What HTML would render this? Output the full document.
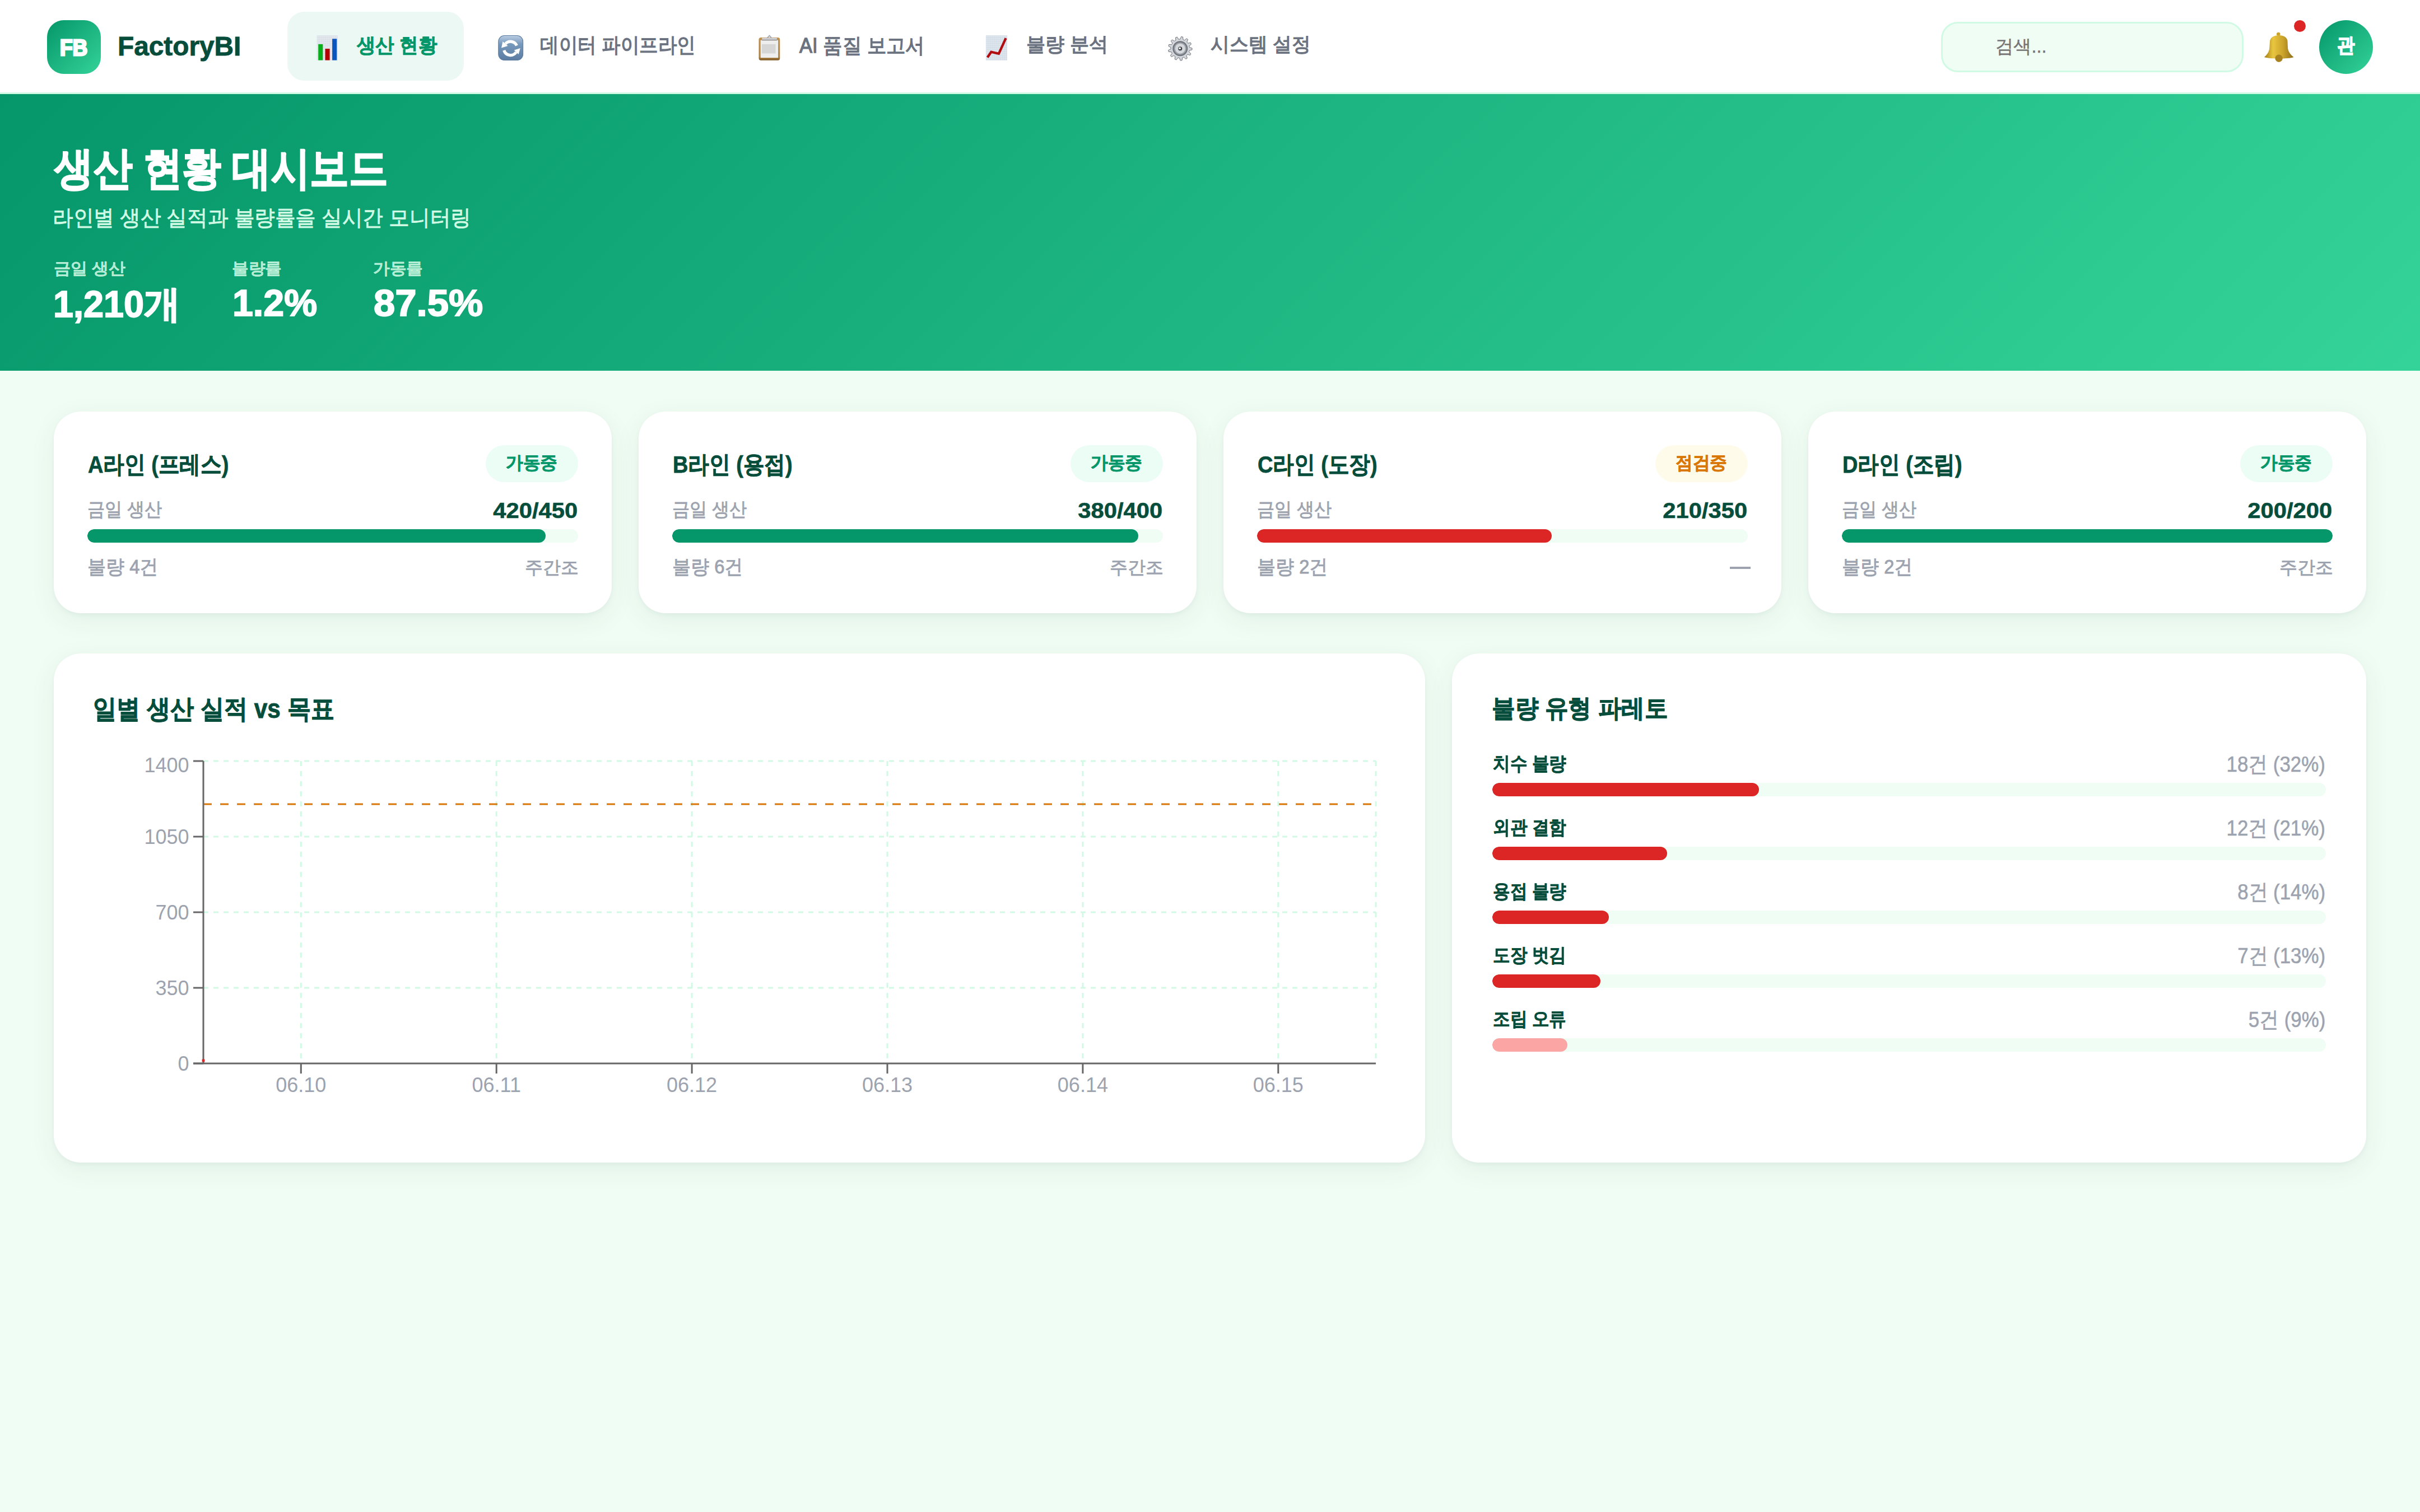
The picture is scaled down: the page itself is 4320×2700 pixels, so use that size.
<!DOCTYPE html>
<html lang="ko">
<head>
<meta charset="utf-8">
<title>FactoryBI</title>
<style>
@media (min-width: 2000px) { html { zoom: 3; } }
html { background: #f0fdf4; }
* { box-sizing: border-box; margin: 0; padding: 0; }
body { width: 1440px; height: 900px; position: relative; overflow: hidden; background: #f0fdf4; font-family: "Liberation Sans", sans-serif; }
.abs { position: absolute; }
.tx { position: absolute; display: inline-block; white-space: nowrap; line-height: 1; }
.nav { position: absolute; left: 0; top: 0; width: 1440px; height: 56px; background: #fff; border-bottom: 1px solid #d1fae5; }
.logo { position: absolute; left: 28px; top: 12px; width: 32px; height: 32px; border-radius: 10px; background: linear-gradient(135deg, #059669, #34d399); }
.navact { position: absolute; left: 171px; top: 7px; width: 105px; height: 41px; border-radius: 10px; background: #ecf8f3; }
.ic { position: absolute; top: 21px; width: 15px; height: 15px; }
.ic svg { display: block; width: 100%; height: 100%; }
.search { position: absolute; left: 1155px; top: 13px; width: 180px; height: 30px; border: 1px solid #d1fae5; background: #f0fdf4; border-radius: 10px; }
.avatar { position: absolute; left: 1380px; top: 12px; width: 32px; height: 32px; border-radius: 50%; background: linear-gradient(135deg, #059669, #34d399); }
.dot { position: absolute; left: 1364.9px; top: 12px; width: 7px; height: 7px; border-radius: 50%; background: #dc2626; }
.hero { position: absolute; left: 0; top: 56px; width: 1440px; height: 164.7px; background: linear-gradient(135deg, #059669 0%, #34d399 100%); }
.card { position: absolute; top: 245px; width: 332px; height: 120px; background: #fff; border-radius: 16px; box-shadow: 0 1px 3px rgba(0,30,15,0.035), 0 4px 16px rgba(10,60,40,0.065); }
.badge { position: absolute; top: 265px; width: 55px; height: 22px; border-radius: 11px; }
.badge.g { background: #ecfdf5; }
.badge.o { background: #fffbeb; }
.bar { position: absolute; height: 8px; border-radius: 4px; background: #f0fdf4; overflow: hidden; }
.bar i { position: absolute; left: 0; top: 0; bottom: 0; border-radius: 4px; }
.panel { position: absolute; top: 389px; height: 303px; background: #fff; border-radius: 16px; box-shadow: 0 1px 3px rgba(0,30,15,0.035), 0 4px 16px rgba(10,60,40,0.065); }
svg text { font-family: "Liberation Sans", sans-serif; }
</style>
</head>
<body>
<div class="nav"></div>
<div class="logo"></div>
<div class="navact"></div>
<div class="search"></div>
<svg class="abs" style="left:0;top:0;width:1440px;height:56px" viewBox="0 0 1440 56">
<defs>
<linearGradient id="gsync" x1="0" y1="0" x2="0" y2="1"><stop offset="0" stop-color="#b9cde2"/><stop offset="0.35" stop-color="#7698bb"/><stop offset="1" stop-color="#5b7da2"/></linearGradient>
<linearGradient id="gbell" x1="0" y1="0" x2="1" y2="0"><stop offset="0" stop-color="#a27a14"/><stop offset="0.3" stop-color="#e9c640"/><stop offset="0.65" stop-color="#c9a22a"/><stop offset="1" stop-color="#8c6c1a"/></linearGradient>
<linearGradient id="gboard" x1="0" y1="0" x2="0" y2="1"><stop offset="0" stop-color="#c2914a"/><stop offset="0.85" stop-color="#b3843f"/><stop offset="1" stop-color="#7d5726"/></linearGradient>
</defs>
<rect x="188.7" y="21.2" width="12.2" height="14.7" fill="#e4e9f0"/>
<g stroke="#d3d9e2" stroke-width="0.2"><line x1="188.7" y1="21.20" x2="200.9" y2="21.20"/><line x1="188.7" y1="22.40" x2="200.9" y2="22.40"/><line x1="188.7" y1="23.60" x2="200.9" y2="23.60"/><line x1="188.7" y1="24.80" x2="200.9" y2="24.80"/><line x1="188.7" y1="26.00" x2="200.9" y2="26.00"/><line x1="188.7" y1="27.20" x2="200.9" y2="27.20"/><line x1="188.7" y1="28.40" x2="200.9" y2="28.40"/><line x1="188.7" y1="29.60" x2="200.9" y2="29.60"/><line x1="188.7" y1="30.80" x2="200.9" y2="30.80"/><line x1="188.7" y1="32.00" x2="200.9" y2="32.00"/><line x1="188.7" y1="33.20" x2="200.9" y2="33.20"/><line x1="188.7" y1="34.40" x2="200.9" y2="34.40"/><line x1="188.7" y1="35.60" x2="200.9" y2="35.60"/><line x1="188.70" y1="21.2" x2="188.70" y2="35.9"/><line x1="189.90" y1="21.2" x2="189.90" y2="35.9"/><line x1="191.10" y1="21.2" x2="191.10" y2="35.9"/><line x1="192.30" y1="21.2" x2="192.30" y2="35.9"/><line x1="193.50" y1="21.2" x2="193.50" y2="35.9"/><line x1="194.70" y1="21.2" x2="194.70" y2="35.9"/><line x1="195.90" y1="21.2" x2="195.90" y2="35.9"/><line x1="197.10" y1="21.2" x2="197.10" y2="35.9"/><line x1="198.30" y1="21.2" x2="198.30" y2="35.9"/><line x1="199.50" y1="21.2" x2="199.50" y2="35.9"/><line x1="200.70" y1="21.2" x2="200.70" y2="35.9"/></g>
<rect x="189.4" y="26.3" width="2.7" height="9.55" fill="#07b01a"/>
<rect x="193.5" y="29" width="2.7" height="6.85" fill="#b70000"/>
<rect x="197.7" y="23.1" width="2.7" height="12.75" fill="#0b55bd"/>
<rect x="296.6" y="21.15" width="14.6" height="14.7" rx="3.6" fill="url(#gsync)" stroke="#5a7b9e" stroke-width="0.35"/>
<g fill="none" stroke="#fff" stroke-width="1.75"><path d="M307.48 27.13 A4.05 4.05 0 0 0 300.77 26.07"/><path d="M299.91 29.96 A4.05 4.05 0 0 0 307.14 31.04"/></g>
<g fill="#fff"><path d="M298.36 28.52 L299.15 24.68 L302.19 27.33 Z"/><path d="M309.6 28.65 L308.54 32.35 L305.9 29.84 Z"/></g>
<rect x="451.5" y="22.3" width="12.6" height="13.6" rx="1.3" fill="url(#gboard)"/>
<rect x="452.56" y="23.9" width="10.47" height="10.5" fill="#eeeeee"/>
<rect x="453.3" y="26.3" width="8.2" height="5.5" fill="#d6d6d6"/>
<rect x="453.43" y="22.56" width="8.86" height="1.2" fill="#cfd3d9"/>
<rect x="453.43" y="23.7" width="8.86" height="0.35" fill="#6e6e70"/>
<path d="M456.4 22.7 L457.85 21.2 L459.2 22.7" fill="none" stroke="#a3a9b1" stroke-width="0.6"/>
<rect x="586.77" y="21.17" width="12.57" height="14.73" fill="#dfe6ee"/>
<g stroke="#cdd6e0" stroke-width="0.2"><line x1="586.77" y1="21.17" x2="599.34" y2="21.17"/><line x1="586.77" y1="22.37" x2="599.34" y2="22.37"/><line x1="586.77" y1="23.57" x2="599.34" y2="23.57"/><line x1="586.77" y1="24.77" x2="599.34" y2="24.77"/><line x1="586.77" y1="25.97" x2="599.34" y2="25.97"/><line x1="586.77" y1="27.17" x2="599.34" y2="27.17"/><line x1="586.77" y1="28.37" x2="599.34" y2="28.37"/><line x1="586.77" y1="29.57" x2="599.34" y2="29.57"/><line x1="586.77" y1="30.77" x2="599.34" y2="30.77"/><line x1="586.77" y1="31.97" x2="599.34" y2="31.97"/><line x1="586.77" y1="33.17" x2="599.34" y2="33.17"/><line x1="586.77" y1="34.37" x2="599.34" y2="34.37"/><line x1="586.77" y1="35.57" x2="599.34" y2="35.57"/><line x1="586.77" y1="21.17" x2="586.77" y2="35.9"/><line x1="587.97" y1="21.17" x2="587.97" y2="35.9"/><line x1="589.17" y1="21.17" x2="589.17" y2="35.9"/><line x1="590.37" y1="21.17" x2="590.37" y2="35.9"/><line x1="591.57" y1="21.17" x2="591.57" y2="35.9"/><line x1="592.77" y1="21.17" x2="592.77" y2="35.9"/><line x1="593.97" y1="21.17" x2="593.97" y2="35.9"/><line x1="595.17" y1="21.17" x2="595.17" y2="35.9"/><line x1="596.37" y1="21.17" x2="596.37" y2="35.9"/><line x1="597.57" y1="21.17" x2="597.57" y2="35.9"/><line x1="598.77" y1="21.17" x2="598.77" y2="35.9"/></g>
<polyline points="587.56,34.2 589.81,30.9 594.31,31.95 598.53,22.7" fill="none" stroke="#b10d10" stroke-width="1.45" stroke-linejoin="miter"/>
<path d="M702.25 23.31 L702.87 21.84 L703.85 21.99 L703.98 23.58 L704.85 23.95 L706.08 22.93 L706.88 23.53 L706.26 25.00 L706.86 25.73 L708.42 25.40 L708.85 26.30 L707.62 27.31 L707.81 28.23 L709.35 28.67 L709.31 29.66 L707.75 29.99 L707.49 30.90 L708.64 31.99 L708.15 32.86 L706.62 32.42 L705.96 33.10 L706.48 34.61 L705.64 35.15 L704.49 34.04 L703.59 34.35 L703.34 35.93 L702.35 36.01 L701.84 34.50 L700.91 34.35 L699.96 35.63 L699.04 35.24 L699.30 33.67 L698.54 33.10 L697.10 33.80 L696.47 33.03 L697.42 31.75 L697.01 30.90 L695.42 30.84 L695.21 29.87 L696.66 29.18 L696.69 28.23 L695.30 27.45 L695.58 26.49 L697.17 26.55 L697.64 25.73 L696.78 24.38 L697.47 23.66 L698.85 24.46 L699.65 23.95 L699.51 22.36 L700.45 22.04 L701.31 23.39 Z" fill="#d3d6db" stroke="#62666e" stroke-width="0.3"/>
<circle cx="702.25" cy="28.91" r="4.5" fill="#70747c"/>
<circle cx="702.25" cy="28.91" r="3.7" fill="#9fa3aa"/>
<circle cx="702.25" cy="28.91" r="3.0" fill="#d5d8dd"/>
<circle cx="702.25" cy="28.91" r="1.2" fill="#3e4147"/>
<circle cx="702.05" cy="28.75" r="0.6" fill="#ffffff"/>
<circle cx="1355.73" cy="20.33" r="1.1" fill="#c9a42c"/>
<path d="M1347.30 34.03 C1348.93 32.53 1350.33 30.93 1350.43 28.13 L1350.68 24.53 C1350.93 22.23 1352.83 21.03 1355.93 21.03 C1359.03 21.03 1360.93 22.23 1361.18 24.53 L1361.33 28.13 C1361.43 30.93 1363.13 32.53 1364.83 34.03 C1361.83 35.23 1350.23 35.23 1347.30 34.03 Z" fill="url(#gbell)"/>
<circle cx="1356.03" cy="34.73" r="2.2" fill="#a8821e"/>
</svg>
<div class="dot"></div>
<div class="avatar"></div>
<div class="hero"></div>
<div class="card" style="left:32px"></div>
<div class="badge g" style="left:289px"></div>
<div class="bar" style="left:52px;top:315px;width:292px"><i style="width:93.333%;background:#059669"></i></div>
<div class="card" style="left:380px"></div>
<div class="badge g" style="left:637px"></div>
<div class="bar" style="left:400px;top:315px;width:292px"><i style="width:95%;background:#059669"></i></div>
<div class="card" style="left:728px"></div>
<div class="badge o" style="left:985px"></div>
<div class="bar" style="left:748px;top:315px;width:292px"><i style="width:60%;background:#dc2626"></i></div>
<div class="abs" style="left:1029.3px;top:337.4px;width:12.4px;height:1.3px;background:#9ca3af"></div>
<div class="card" style="left:1076px"></div>
<div class="badge g" style="left:1333px"></div>
<div class="bar" style="left:1096px;top:315px;width:292px"><i style="width:100%;background:#059669"></i></div>
<div class="panel" style="left:32px;width:816px"></div>
<div class="panel" style="left:864px;width:544px"></div>
<svg class="abs" style="left:0;top:0;width:1440px;height:900px" viewBox="0 0 1440 900">
<g stroke="#d1fae5" stroke-width="1" stroke-dasharray="3 3" fill="none">
<line x1="121" y1="588" x2="818.7" y2="588"/>
<line x1="121" y1="543" x2="818.7" y2="543"/>
<line x1="121" y1="498" x2="818.7" y2="498"/>
<line x1="121" y1="453" x2="818.7" y2="453"/>
<line x1="179.1" y1="453" x2="179.1" y2="633"/>
<line x1="295.4" y1="453" x2="295.4" y2="633"/>
<line x1="411.7" y1="453" x2="411.7" y2="633"/>
<line x1="528.0" y1="453" x2="528.0" y2="633"/>
<line x1="644.3" y1="453" x2="644.3" y2="633"/>
<line x1="760.6" y1="453" x2="760.6" y2="633"/>
<line x1="818.7" y1="453" x2="818.7" y2="633"/>
</g>
<line x1="121" y1="478.7" x2="816.7" y2="478.7" stroke="#d97706" stroke-width="1" stroke-dasharray="5 5"/>
<g stroke="#666" stroke-width="1" fill="none">
<line x1="121" y1="453" x2="121" y2="633"/>
<line x1="115" y1="633" x2="818.7" y2="633"/>
<line x1="115" y1="633" x2="121" y2="633"/>
<line x1="115" y1="588" x2="121" y2="588"/>
<line x1="115" y1="543" x2="121" y2="543"/>
<line x1="115" y1="498" x2="121" y2="498"/>
<line x1="115" y1="453" x2="121" y2="453"/>
<line x1="179.1" y1="633" x2="179.1" y2="639"/>
<line x1="295.4" y1="633" x2="295.4" y2="639"/>
<line x1="411.7" y1="633" x2="411.7" y2="639"/>
<line x1="528.0" y1="633" x2="528.0" y2="639"/>
<line x1="644.3" y1="633" x2="644.3" y2="639"/>
<line x1="760.6" y1="633" x2="760.6" y2="639"/>
</g>
<g fill="#9ca3af" font-size="12" text-anchor="end">
<text x="112.5" y="637.3">0</text>
<text x="112.5" y="592.3">350</text>
<text x="112.5" y="547.3">700</text>
<text x="112.5" y="502.3">1050</text>
<text x="112.5" y="459.6">1400</text>
</g><g fill="#9ca3af" font-size="12" text-anchor="middle">
<text x="179.1" y="650">06.10</text>
<text x="295.4" y="650">06.11</text>
<text x="411.7" y="650">06.12</text>
<text x="528.0" y="650">06.13</text>
<text x="644.3" y="650">06.14</text>
<text x="760.6" y="650">06.15</text>
</g>
<rect x="120.2" y="630.5" width="1.6" height="1.6" fill="#dc2626"/>
</svg>
<div class="bar" style="left:888px;top:466.10px;width:496px"><i style="width:32%;background:#dc2626"></i></div>
<div class="bar" style="left:888px;top:504.08px;width:496px"><i style="width:21%;background:#dc2626"></i></div>
<div class="bar" style="left:888px;top:542.06px;width:496px"><i style="width:14%;background:#dc2626"></i></div>
<div class="bar" style="left:888px;top:580.04px;width:496px"><i style="width:13%;background:#dc2626"></i></div>
<div class="bar" style="left:888px;top:618.02px;width:496px"><i style="width:9%;background:#fca5a5"></i></div>
<span class="tx" id="logoFB" style="left:35.66px;top:21.53px;font-size:13.35px;font-weight:bold;color:#fff;transform:scaleX(0.9242);transform-origin:left top;-webkit-text-stroke:1.0px #fff">FB</span>
<span class="tx" id="brand" style="left:70.16px;top:19.63px;font-size:15.96px;font-weight:bold;color:#064e3b;transform:scaleX(0.9977);transform-origin:left top;-webkit-text-stroke:0.3px #064e3b">FactoryBI</span>
<span class="tx" id="n1" style="left:212.40px;top:20.90px;font-size:12.13px;font-weight:bold;color:#059669;transform:scaleX(0.9277);transform-origin:left top;-webkit-text-stroke:0.25px #059669">생산 현황</span>
<span class="tx" id="n2" style="left:321.40px;top:21.04px;font-size:12.18px;font-weight:normal;color:#6b7280;transform:scaleX(0.9078);transform-origin:left top;-webkit-text-stroke:0.45px #6b7280">데이터 파이프라인</span>
<span class="tx" id="n3" style="left:475.54px;top:21.10px;font-size:12.37px;font-weight:normal;color:#6b7280;transform:scaleX(0.9299);transform-origin:left top;-webkit-text-stroke:0.45px #6b7280">AI 품질 보고서</span>
<span class="tx" id="n4" style="left:610.53px;top:20.70px;font-size:11.83px;font-weight:normal;color:#6b7280;transform:scaleX(0.9742);transform-origin:left top;-webkit-text-stroke:0.45px #6b7280">불량 분석</span>
<span class="tx" id="n5" style="left:720.27px;top:20.70px;font-size:11.83px;font-weight:normal;color:#6b7280;transform:scaleX(0.9651);transform-origin:left top;-webkit-text-stroke:0.45px #6b7280">시스템 설정</span>
<span class="tx" id="srch" style="left:1187.47px;top:21.86px;font-size:11.04px;font-weight:normal;color:#757575;transform:scaleX(0.9761);transform-origin:left top;-webkit-text-stroke:0.15px #757575">검색...</span>
<span class="tx" id="av" style="left:1390.67px;top:21.10px;font-size:12.04px;font-weight:bold;color:#fff;transform:scaleX(0.8755);transform-origin:left top;-webkit-text-stroke:0.5px #fff">관</span>
<span class="tx" id="h1" style="left:32.20px;top:86.57px;font-size:26.82px;font-weight:bold;color:#fff;transform:scaleX(0.8698);transform-origin:left top;-webkit-text-stroke:0.7px #fff">생산 현황 대시보드</span>
<span class="tx" id="sub" style="left:31.27px;top:123.07px;font-size:13.03px;font-weight:normal;color:#d1fae5;transform:scaleX(0.9390);transform-origin:left top;-webkit-text-stroke:0.3px #d1fae5">라인별 생산 실적과 불량률을 실시간 모니터링</span>
<span class="tx" id="sl1" style="left:31.94px;top:155.00px;font-size:9.72px;font-weight:bold;color:rgba(209,250,229,0.72);transform:scaleX(1.0332);transform-origin:left top;-webkit-text-stroke:0.1px rgba(209,250,229,0.72)">금일 생산</span>
<span class="tx" id="sl2" style="left:138.00px;top:155.00px;font-size:9.71px;font-weight:bold;color:rgba(209,250,229,0.72);transform:scaleX(1.0218);transform-origin:left top;-webkit-text-stroke:0.1px rgba(209,250,229,0.72)">불량률</span>
<span class="tx" id="sl3" style="left:222.07px;top:155.00px;font-size:9.71px;font-weight:bold;color:rgba(209,250,229,0.72);transform:scaleX(1.0227);transform-origin:left top;-webkit-text-stroke:0.1px rgba(209,250,229,0.72)">가동률</span>
<span class="tx" id="sv1" style="left:31.83px;top:170.10px;font-size:22.23px;font-weight:bold;color:#fff;transform:scaleX(0.9709);transform-origin:left top;-webkit-text-stroke:0.6px #fff">1,210개</span>
<span class="tx" id="sv2" style="left:138.17px;top:169.26px;font-size:22.14px;font-weight:bold;color:#fff;transform:scaleX(0.9980);transform-origin:left top;-webkit-text-stroke:0.6px #fff">1.2%</span>
<span class="tx" id="sv3" style="left:222.33px;top:169.26px;font-size:22.14px;font-weight:bold;color:#fff;transform:scaleX(1.0371);transform-origin:left top;-webkit-text-stroke:0.6px #fff">87.5%</span>
<span class="tx" id="ct1" style="left:52.20px;top:269.20px;font-size:14.46px;font-weight:bold;color:#064e3b;transform:scaleX(0.8749);transform-origin:left top;-webkit-text-stroke:0.25px #064e3b">A라인 (프레스)</span>
<span class="tx" id="bd1" style="left:301.14px;top:270.06px;font-size:10.68px;font-weight:bold;color:#059669;transform:scaleX(0.9608);transform-origin:left top;-webkit-text-stroke:0.25px #059669">가동중</span>
<span class="tx" id="cl1" style="left:52.00px;top:297.44px;font-size:11.36px;font-weight:normal;color:#9ca3af;transform:scaleX(0.9173);transform-origin:left top;-webkit-text-stroke:0.3px #9ca3af">금일 생산</span>
<span class="tx" id="cv1" style="right:1096.13px;top:297.33px;font-size:13.02px;font-weight:bold;color:#064e3b;transform:scaleX(1.0686);transform-origin:right top;-webkit-text-stroke:0.2px #064e3b">420/450</span>
<span class="tx" id="cb1" style="left:52.00px;top:331.57px;font-size:11.53px;font-weight:normal;color:#9ca3af;transform:scaleX(0.9450);transform-origin:left top;-webkit-text-stroke:0.3px #9ca3af">불량 4건</span>
<span class="tx" id="cs1" style="right:1095.60px;top:332.57px;font-size:10.61px;font-weight:normal;color:#9ca3af;transform:scaleX(0.9976);transform-origin:right top;-webkit-text-stroke:0.3px #9ca3af">주간조</span>
<span class="tx" id="ct1_1" style="left:400.20px;top:269.20px;font-size:14.46px;font-weight:bold;color:#064e3b;transform:scaleX(0.8749);transform-origin:left top;-webkit-text-stroke:0.25px #064e3b">B라인 (용접)</span>
<span class="tx" id="bd1_1" style="left:649.13px;top:270.06px;font-size:10.68px;font-weight:bold;color:#059669;transform:scaleX(0.9608);transform-origin:left top;-webkit-text-stroke:0.25px #059669">가동중</span>
<span class="tx" id="cl1_1" style="left:400.00px;top:297.44px;font-size:11.36px;font-weight:normal;color:#9ca3af;transform:scaleX(0.9173);transform-origin:left top;-webkit-text-stroke:0.3px #9ca3af">금일 생산</span>
<span class="tx" id="cv1_1" style="right:748.13px;top:297.33px;font-size:13.02px;font-weight:bold;color:#064e3b;transform:scaleX(1.0686);transform-origin:right top;-webkit-text-stroke:0.2px #064e3b">380/400</span>
<span class="tx" id="cb1_1" style="left:400.00px;top:331.57px;font-size:11.53px;font-weight:normal;color:#9ca3af;transform:scaleX(0.9450);transform-origin:left top;-webkit-text-stroke:0.3px #9ca3af">불량 6건</span>
<span class="tx" id="cs1_1" style="right:747.60px;top:332.57px;font-size:10.61px;font-weight:normal;color:#9ca3af;transform:scaleX(0.9976);transform-origin:right top;-webkit-text-stroke:0.3px #9ca3af">주간조</span>
<span class="tx" id="ct1_2" style="left:748.20px;top:269.20px;font-size:14.46px;font-weight:bold;color:#064e3b;transform:scaleX(0.8749);transform-origin:left top;-webkit-text-stroke:0.25px #064e3b">C라인 (도장)</span>
<span class="tx" id="bd1_2" style="left:997.13px;top:270.06px;font-size:10.68px;font-weight:bold;color:#d97706;transform:scaleX(0.9608);transform-origin:left top;-webkit-text-stroke:0.25px #d97706">점검중</span>
<span class="tx" id="cl1_2" style="left:748.00px;top:297.44px;font-size:11.36px;font-weight:normal;color:#9ca3af;transform:scaleX(0.9173);transform-origin:left top;-webkit-text-stroke:0.3px #9ca3af">금일 생산</span>
<span class="tx" id="cv1_2" style="right:400.13px;top:297.33px;font-size:13.02px;font-weight:bold;color:#064e3b;transform:scaleX(1.0686);transform-origin:right top;-webkit-text-stroke:0.2px #064e3b">210/350</span>
<span class="tx" id="cb1_2" style="left:748.00px;top:331.57px;font-size:11.53px;font-weight:normal;color:#9ca3af;transform:scaleX(0.9450);transform-origin:left top;-webkit-text-stroke:0.3px #9ca3af">불량 2건</span>
<span class="tx" id="ct1_3" style="left:1096.20px;top:269.20px;font-size:14.46px;font-weight:bold;color:#064e3b;transform:scaleX(0.8749);transform-origin:left top;-webkit-text-stroke:0.25px #064e3b">D라인 (조립)</span>
<span class="tx" id="bd1_3" style="left:1345.13px;top:270.06px;font-size:10.68px;font-weight:bold;color:#059669;transform:scaleX(0.9608);transform-origin:left top;-webkit-text-stroke:0.25px #059669">가동중</span>
<span class="tx" id="cl1_3" style="left:1096.00px;top:297.44px;font-size:11.36px;font-weight:normal;color:#9ca3af;transform:scaleX(0.9173);transform-origin:left top;-webkit-text-stroke:0.3px #9ca3af">금일 생산</span>
<span class="tx" id="cv1_3" style="right:52.13px;top:297.33px;font-size:13.02px;font-weight:bold;color:#064e3b;transform:scaleX(1.0686);transform-origin:right top;-webkit-text-stroke:0.2px #064e3b">200/200</span>
<span class="tx" id="cb1_3" style="left:1096.00px;top:331.57px;font-size:11.53px;font-weight:normal;color:#9ca3af;transform:scaleX(0.9450);transform-origin:left top;-webkit-text-stroke:0.3px #9ca3af">불량 2건</span>
<span class="tx" id="cs1_3" style="right:51.60px;top:332.57px;font-size:10.61px;font-weight:normal;color:#9ca3af;transform:scaleX(0.9976);transform-origin:right top;-webkit-text-stroke:0.3px #9ca3af">주간조</span>
<span class="tx" id="pt1" style="left:55.40px;top:413.90px;font-size:15.74px;font-weight:bold;color:#064e3b;transform:scaleX(0.8955);transform-origin:left top;-webkit-text-stroke:0.3px #064e3b">일별 생산 실적 vs 목표</span>
<span class="tx" id="pt2" style="left:887.60px;top:414.04px;font-size:15.00px;font-weight:bold;color:#064e3b;transform:scaleX(0.9249);transform-origin:left top;-webkit-text-stroke:0.3px #064e3b">불량 유형 파레토</span>
<span class="tx" id="pn1" style="left:888.27px;top:448.64px;font-size:11.41px;font-weight:bold;color:#064e3b;transform:scaleX(0.8994);transform-origin:left top;-webkit-text-stroke:0.2px #064e3b">치수 불량</span>
<span class="tx" id="pv1" style="right:56.33px;top:448.34px;font-size:13.06px;font-weight:normal;color:#9ca3af;transform:scaleX(0.8911);transform-origin:right top;-webkit-text-stroke:0.2px #9ca3af">18건 (32%)</span>
<span class="tx" id="pn1_1" style="left:888.27px;top:486.62px;font-size:11.41px;font-weight:bold;color:#064e3b;transform:scaleX(0.8994);transform-origin:left top;-webkit-text-stroke:0.2px #064e3b">외관 결함</span>
<span class="tx" id="pv1_1" style="right:56.33px;top:486.32px;font-size:13.06px;font-weight:normal;color:#9ca3af;transform:scaleX(0.8911);transform-origin:right top;-webkit-text-stroke:0.2px #9ca3af">12건 (21%)</span>
<span class="tx" id="pn1_2" style="left:888.27px;top:524.60px;font-size:11.41px;font-weight:bold;color:#064e3b;transform:scaleX(0.8994);transform-origin:left top;-webkit-text-stroke:0.2px #064e3b">용접 불량</span>
<span class="tx" id="pv1_2" style="right:56.33px;top:524.30px;font-size:13.06px;font-weight:normal;color:#9ca3af;transform:scaleX(0.8911);transform-origin:right top;-webkit-text-stroke:0.2px #9ca3af">8건 (14%)</span>
<span class="tx" id="pn1_3" style="left:888.27px;top:562.58px;font-size:11.41px;font-weight:bold;color:#064e3b;transform:scaleX(0.8994);transform-origin:left top;-webkit-text-stroke:0.2px #064e3b">도장 벗김</span>
<span class="tx" id="pv1_3" style="right:56.33px;top:562.28px;font-size:13.06px;font-weight:normal;color:#9ca3af;transform:scaleX(0.8911);transform-origin:right top;-webkit-text-stroke:0.2px #9ca3af">7건 (13%)</span>
<span class="tx" id="pn1_4" style="left:888.27px;top:600.56px;font-size:11.41px;font-weight:bold;color:#064e3b;transform:scaleX(0.8994);transform-origin:left top;-webkit-text-stroke:0.2px #064e3b">조립 오류</span>
<span class="tx" id="pv1_4" style="right:56.33px;top:600.26px;font-size:13.06px;font-weight:normal;color:#9ca3af;transform:scaleX(0.8911);transform-origin:right top;-webkit-text-stroke:0.2px #9ca3af">5건 (9%)</span>
</body>
</html>
